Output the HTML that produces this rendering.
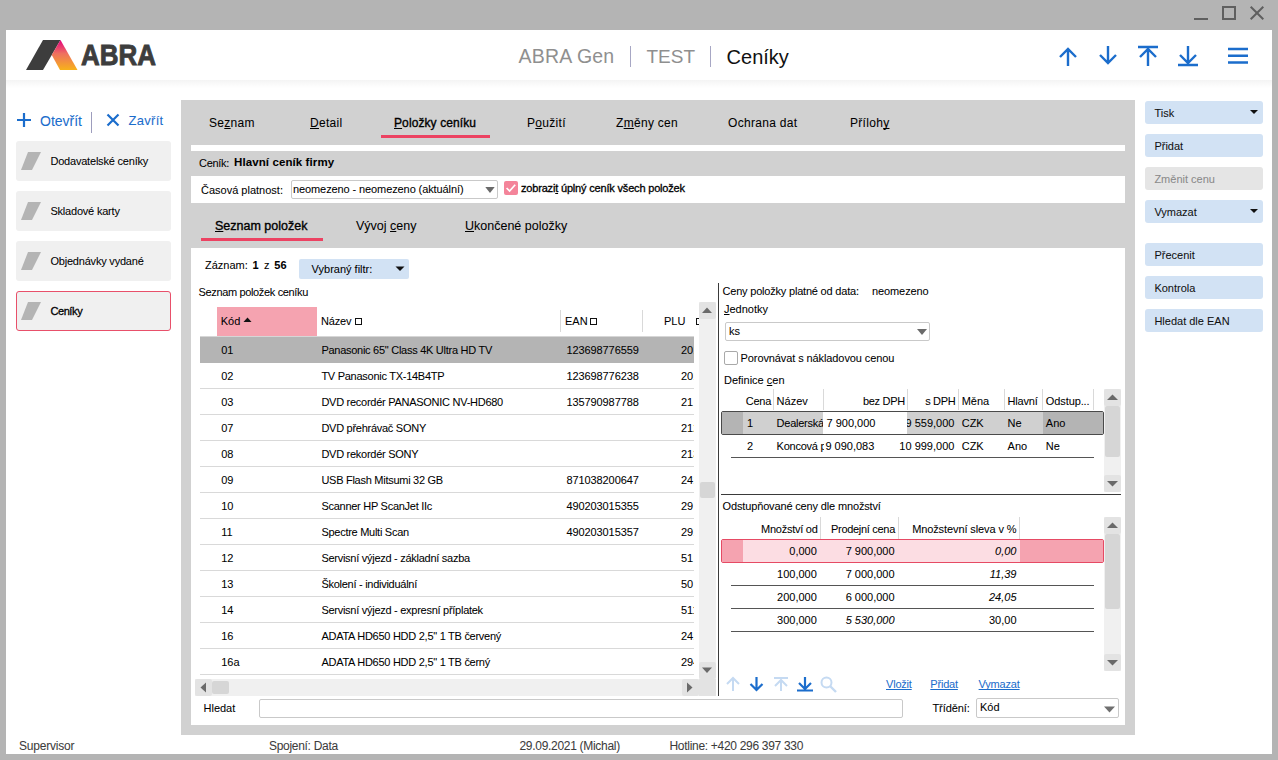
<!DOCTYPE html><html><head><meta charset="utf-8"><style>
html,body{margin:0;padding:0;}
body{width:1278px;height:760px;position:relative;overflow:hidden;background:#b4b4b4;font-family:"Liberation Sans", sans-serif;}
.a{position:absolute;}
.t{position:absolute;white-space:nowrap;line-height:1;-webkit-text-stroke:0.05px currentColor;}
u{text-decoration-skip-ink:none;text-decoration:underline;text-underline-offset:1px;text-decoration-thickness:1px;}
svg{position:absolute;}

</style></head><body>
<div class="a" style="left:6px;top:30px;width:1266px;height:724px;background:#ffffff;"></div>
<svg style="left:1190px;top:2px" width="80" height="24" viewBox="1190 2 80 24"><rect x="1194" y="18" width="14" height="2" fill="#5f5f5f"/><rect x="1223" y="7" width="12" height="12" fill="none" stroke="#5f5f5f" stroke-width="2"/><path d="M1250.7 6.7 L1263.3 19.3 M1263.3 6.7 L1250.7 19.3" stroke="#5f5f5f" stroke-width="2"/></svg>
<div class="a" style="left:6px;top:80px;width:1266px;height:8px;background:linear-gradient(#f4f4f4,#ffffff);"></div>
<svg style="left:20px;top:34px" width="140" height="42" viewBox="20 34 140 42"><defs><linearGradient id="lg" x1="0" y1="0" x2="0" y2="1"><stop offset="0" stop-color="#e5007e"/><stop offset="0.45" stop-color="#ee7060"/><stop offset="1" stop-color="#f7b21a"/></linearGradient></defs><path d="M26 70 L43 70 L60.5 40 L43 40 Z" fill="#3d3d3d"/><path d="M60.5 40 L77.5 70 L60 70 L51.75 55 Z" fill="url(#lg)"/><text x="81" y="65.3" font-family="Liberation Sans" font-weight="700" font-size="29" fill="#3d3d3d" stroke="#3d3d3d" stroke-width="0.9" textLength="75" lengthAdjust="spacingAndGlyphs">ABRA</text></svg>
<span class="t" style="top:46.99px;font-size:19.5px;color:#8f8f8f;letter-spacing:0.2px;left:518.5px;-webkit-text-stroke:0;">ABRA Gen</span>
<div class="a" style="left:630px;top:46px;width:1px;height:21px;background:#a7a7c4;"></div>
<span class="t" style="top:47.42px;font-size:19px;color:#8f8f8f;left:646.5px;-webkit-text-stroke:0;">TEST</span>
<div class="a" style="left:710px;top:46px;width:1px;height:21px;background:#a7a7c4;"></div>
<span class="t" style="top:46.57px;font-size:20px;color:#111111;left:726.6px;-webkit-text-stroke:0;">Ceníky</span>
<svg style="left:1050px;top:40px" width="210" height="32" viewBox="1050 40 210 32" fill="none" stroke="#1b6dcc" stroke-width="2.4"><path d="M1068 66 V49 M1060 57 L1068 49 L1076 57"/><path d="M1108 46 V63 M1100 55 L1108 63 L1116 55"/><path d="M1138 47 H1158 M1148 66 V49 M1140 57 L1148 49 L1156 57"/><path d="M1178 65 H1198 M1188 46 V63 M1180 55 L1188 63 L1196 55"/><path d="M1228 49 H1248 M1228 55.8 H1248 M1228 62.5 H1248" stroke-width="2.6"/></svg>
<svg style="left:10px;top:108px" width="120" height="30" viewBox="10 108 120 30" fill="none" stroke="#1b6dcc" stroke-width="2.2"><path d="M24 113 V127 M17 120 H31"/><path d="M107.5 114.5 L118.5 125.5 M118.5 114.5 L107.5 125.5"/></svg>
<span class="t" style="top:113.55px;font-size:14px;color:#1b6dcc;left:40px;">Otevřít</span>
<div class="a" style="left:91px;top:112px;width:1px;height:21px;background:#9d9dbd;"></div>
<span class="t" style="top:114.40px;font-size:13px;color:#1b6dcc;letter-spacing:0.3px;left:128.5px;">Zavřít</span>
<div class="a" style="left:16px;top:141px;width:155px;height:40px;background:#f0f0f0;border-radius:3px;"></div>
<svg style="left:16px;top:141px" width="40" height="40" viewBox="0 0 40 40"><path d="M12 11 L25 11 L16 29 L5 29 Z" fill="#b4b4b4"/></svg>
<span class="t" style="top:155.69px;font-size:11px;color:#000000;letter-spacing:-0.2px;left:50.4px;">Dodavatelské ceníky</span>
<div class="a" style="left:16px;top:191px;width:155px;height:40px;background:#f0f0f0;border-radius:3px;"></div>
<svg style="left:16px;top:191px" width="40" height="40" viewBox="0 0 40 40"><path d="M12 11 L25 11 L16 29 L5 29 Z" fill="#b4b4b4"/></svg>
<span class="t" style="top:205.69px;font-size:11px;color:#000000;letter-spacing:-0.2px;left:50.4px;">Skladové karty</span>
<div class="a" style="left:16px;top:241px;width:155px;height:40px;background:#f0f0f0;border-radius:3px;"></div>
<svg style="left:16px;top:241px" width="40" height="40" viewBox="0 0 40 40"><path d="M12 11 L25 11 L16 29 L5 29 Z" fill="#b4b4b4"/></svg>
<span class="t" style="top:255.69px;font-size:11px;color:#000000;letter-spacing:-0.2px;left:50.4px;">Objednávky vydané</span>
<div class="a" style="left:16px;top:291px;width:155px;height:40px;background:#f0f0f0;border:1px solid #e8506a;box-sizing:border-box;border-radius:3px;"></div>
<svg style="left:16px;top:291px" width="40" height="40" viewBox="0 0 40 40"><path d="M12 11 L25 11 L16 29 L5 29 Z" fill="#b4b4b4"/></svg>
<span class="t" style="top:305.69px;font-size:11px;color:#000000;letter-spacing:-0.4px;left:50.4px;-webkit-text-stroke:0.3px #000;">Ceníky</span>
<div class="a" style="left:181px;top:100px;width:954px;height:635px;background:#d1d1d1;"></div>
<span class="t" style="top:117.04px;font-size:12px;color:#000000;letter-spacing:0.3px;left:209px;">Se<u>z</u>nam</span>
<span class="t" style="top:117.04px;font-size:12px;color:#000000;letter-spacing:0.3px;left:310px;"><u>D</u>etail</span>
<span class="t" style="top:117.04px;font-size:12px;color:#000000;letter-spacing:0.1px;left:394px;-webkit-text-stroke:0.35px #000;"><u>P</u>oložky ceníku</span>
<span class="t" style="top:117.04px;font-size:12px;color:#000000;letter-spacing:0.3px;left:527px;">P<u>o</u>užití</span>
<span class="t" style="top:117.04px;font-size:12px;color:#000000;letter-spacing:0.3px;left:616px;">Z<u>m</u>ěny cen</span>
<span class="t" style="top:117.04px;font-size:12px;color:#000000;letter-spacing:0.3px;left:728px;">Ochrana dat</span>
<span class="t" style="top:117.04px;font-size:12px;color:#000000;letter-spacing:0.3px;left:850px;">Příloh<u>y</u></span>
<div class="a" style="left:381px;top:135px;width:109px;height:3px;background:#ec4262;"></div>
<div class="a" style="left:191px;top:145px;width:934px;height:6px;background:#ffffff;"></div>
<span class="t" style="top:157.69px;font-size:11px;color:#000000;letter-spacing:-0.3px;left:199px;">Ceník:</span>
<span class="t" style="top:157.27px;font-size:11.5px;color:#000000;font-weight:700;letter-spacing:0.1px;left:234px;">Hlavní ceník firmy</span>
<div class="a" style="left:191px;top:176px;width:934px;height:27px;background:#ffffff;"></div>
<span class="t" style="top:184.69px;font-size:11px;color:#000000;left:201px;">Časová platnost:</span>
<div class="a" style="left:291px;top:180px;width:207px;height:19px;background:#ffffff;border:1px solid #c9c9c9;box-sizing:border-box;border-radius:2px;"></div>
<span class="t" style="top:183.99px;font-size:11px;color:#000000;letter-spacing:-0.1px;left:293px;">neomezeno - neomezeno (aktuální)</span>
<svg style="left:484px;top:184px" width="12" height="12" viewBox="484 184 12 12"><path d="M485.3 187 H494.7 L490 193 Z" fill="#6a6a6a"/></svg>
<div class="a" style="left:504px;top:181px;width:14px;height:14px;background:#f4849a;border-radius:2px;"></div>
<svg style="left:504px;top:181px" width="14" height="14" viewBox="0 0 14 14"><path d="M2.6 7 L5.6 10 L11.2 3.8" fill="none" stroke="#ffffff" stroke-width="1.7"/></svg>
<span class="t" style="top:183.29px;font-size:11px;color:#000000;letter-spacing:-0.18px;left:521px;-webkit-text-stroke:0.3px #000;">zobrazi<u>t</u> úplný ceník všech položek</span>
<span class="t" style="top:220.42px;font-size:12.5px;color:#000000;left:215px;-webkit-text-stroke:0.35px #000;"><u>S</u>eznam položek</span>
<span class="t" style="top:220.42px;font-size:12.5px;color:#000000;left:356px;">Vývoj <u>c</u>eny</span>
<span class="t" style="top:220.42px;font-size:12.5px;color:#000000;left:465px;"><u>U</u>končené položky</span>
<div class="a" style="left:201px;top:238px;width:122px;height:3px;background:#ec4262;"></div>
<div class="a" style="left:191px;top:248px;width:934px;height:477px;background:#ffffff;"></div>
<span class="t" style="top:259.69px;font-size:11px;color:#000000;left:205px;">Záznam:</span>
<span class="t" style="top:259.69px;font-size:11px;color:#000000;font-weight:700;left:252.5px;">1</span>
<span class="t" style="top:259.69px;font-size:11px;color:#000000;left:264px;">z</span>
<span class="t" style="top:259.69px;font-size:11px;color:#000000;font-weight:700;left:274.3px;">56</span>
<div class="a" style="left:299px;top:259px;width:110px;height:20px;background:#d2e2f4;border-radius:2px;"></div>
<span class="t" style="top:264.19px;font-size:11px;color:#000000;left:311.6px;">Vybraný filtr:</span>
<svg style="left:394px;top:264px" width="12" height="10" viewBox="394 264 12 10"><path d="M395.5 266.5 H404.5 L400 271 Z" fill="#111"/></svg>
<span class="t" style="top:286.69px;font-size:11px;color:#000000;letter-spacing:-0.35px;left:198.5px;">Seznam položek ceníku</span>
<div class="a" style="left:217px;top:307px;width:100px;height:29px;background:#f5a3b0;"></div>
<span class="t" style="top:316.39px;font-size:11px;color:#000000;left:220.7px;">Kód</span>
<svg style="left:240px;top:316px" width="12" height="8" viewBox="240 316 12 8"><path d="M243.5 322 L247.5 317.5 L251.5 322 Z" fill="#111"/></svg>
<span class="t" style="top:316.39px;font-size:11px;color:#000000;letter-spacing:-0.2px;left:321px;">Název</span>
<div class="a" style="left:355px;top:318px;width:7px;height:7px;border:1.2px solid #111;box-sizing:border-box;"></div>
<div class="a" style="left:560px;top:310px;width:1px;height:22px;background:#d9d9d9;"></div>
<span class="t" style="top:316.39px;font-size:11px;color:#000000;left:565px;">EAN</span>
<div class="a" style="left:590px;top:318px;width:7px;height:7px;border:1.2px solid #111;box-sizing:border-box;"></div>
<div class="a" style="left:642px;top:310px;width:1px;height:22px;background:#d9d9d9;"></div>
<span class="t" style="top:316.39px;font-size:11px;color:#000000;left:664px;">PLU</span>
<div class="a" style="left:696px;top:318px;width:4px;height:7px;border:1.2px solid #111;box-sizing:border-box;"></div>
<div class="a" style="left:200px;top:336px;width:494px;height:1px;background:#d6d6d6;"></div>
<div class="a" style="left:200px;top:337px;width:494px;height:26px;background:#b4b4b4;"></div>
<span class="t" style="top:345.09px;font-size:11px;color:#000000;left:221.2px;">01</span>
<span class="t" style="top:345.09px;font-size:11px;color:#000000;letter-spacing:-0.27px;left:321.4px;">Panasonic 65&quot; Class 4K Ultra HD TV</span>
<span class="t" style="top:345.09px;font-size:11px;color:#000000;letter-spacing:-0.1px;left:566.5px;">123698776559</span>
<div class="a" style="left:600px;top:0;width:94px;height:760px;overflow:hidden"><div class="a" style="left:-600px;top:0;width:1278px;height:760px"><span class="t" style="top:345.09px;font-size:11px;color:#000000;left:681px;">2011</span></div></div>
<div class="a" style="left:200px;top:388px;width:494px;height:1px;background:#d9d9d9;"></div>
<span class="t" style="top:371.09px;font-size:11px;color:#000000;left:221.2px;">02</span>
<span class="t" style="top:371.09px;font-size:11px;color:#000000;letter-spacing:-0.27px;left:321.4px;">TV Panasonic TX-14B4TP</span>
<span class="t" style="top:371.09px;font-size:11px;color:#000000;letter-spacing:-0.1px;left:566.5px;">123698776238</span>
<div class="a" style="left:600px;top:0;width:94px;height:760px;overflow:hidden"><div class="a" style="left:-600px;top:0;width:1278px;height:760px"><span class="t" style="top:371.09px;font-size:11px;color:#000000;left:681px;">2012</span></div></div>
<div class="a" style="left:200px;top:414px;width:494px;height:1px;background:#d9d9d9;"></div>
<span class="t" style="top:397.09px;font-size:11px;color:#000000;left:221.2px;">03</span>
<span class="t" style="top:397.09px;font-size:11px;color:#000000;letter-spacing:-0.27px;left:321.4px;">DVD recordér PANASONIC NV-HD680</span>
<span class="t" style="top:397.09px;font-size:11px;color:#000000;letter-spacing:-0.1px;left:566.5px;">135790987788</span>
<div class="a" style="left:600px;top:0;width:94px;height:760px;overflow:hidden"><div class="a" style="left:-600px;top:0;width:1278px;height:760px"><span class="t" style="top:397.09px;font-size:11px;color:#000000;left:681px;">21</span></div></div>
<div class="a" style="left:200px;top:440px;width:494px;height:1px;background:#d9d9d9;"></div>
<span class="t" style="top:423.09px;font-size:11px;color:#000000;left:221.2px;">07</span>
<span class="t" style="top:423.09px;font-size:11px;color:#000000;letter-spacing:-0.27px;left:321.4px;">DVD přehrávač SONY</span>
<div class="a" style="left:600px;top:0;width:94px;height:760px;overflow:hidden"><div class="a" style="left:-600px;top:0;width:1278px;height:760px"><span class="t" style="top:423.09px;font-size:11px;color:#000000;left:681px;">2121</span></div></div>
<div class="a" style="left:200px;top:466px;width:494px;height:1px;background:#d9d9d9;"></div>
<span class="t" style="top:449.09px;font-size:11px;color:#000000;left:221.2px;">08</span>
<span class="t" style="top:449.09px;font-size:11px;color:#000000;letter-spacing:-0.27px;left:321.4px;">DVD rekordér SONY</span>
<div class="a" style="left:600px;top:0;width:94px;height:760px;overflow:hidden"><div class="a" style="left:-600px;top:0;width:1278px;height:760px"><span class="t" style="top:449.09px;font-size:11px;color:#000000;left:681px;">2131</span></div></div>
<div class="a" style="left:200px;top:492px;width:494px;height:1px;background:#d9d9d9;"></div>
<span class="t" style="top:475.09px;font-size:11px;color:#000000;left:221.2px;">09</span>
<span class="t" style="top:475.09px;font-size:11px;color:#000000;letter-spacing:-0.27px;left:321.4px;">USB Flash Mitsumi 32 GB</span>
<span class="t" style="top:475.09px;font-size:11px;color:#000000;letter-spacing:-0.1px;left:566.5px;">871038200647</span>
<div class="a" style="left:600px;top:0;width:94px;height:760px;overflow:hidden"><div class="a" style="left:-600px;top:0;width:1278px;height:760px"><span class="t" style="top:475.09px;font-size:11px;color:#000000;left:681px;">2411</span></div></div>
<div class="a" style="left:200px;top:518px;width:494px;height:1px;background:#d9d9d9;"></div>
<span class="t" style="top:501.09px;font-size:11px;color:#000000;left:221.2px;">10</span>
<span class="t" style="top:501.09px;font-size:11px;color:#000000;letter-spacing:-0.27px;left:321.4px;">Scanner HP ScanJet IIc</span>
<span class="t" style="top:501.09px;font-size:11px;color:#000000;letter-spacing:-0.1px;left:566.5px;">490203015355</span>
<div class="a" style="left:600px;top:0;width:94px;height:760px;overflow:hidden"><div class="a" style="left:-600px;top:0;width:1278px;height:760px"><span class="t" style="top:501.09px;font-size:11px;color:#000000;left:681px;">29</span></div></div>
<div class="a" style="left:200px;top:544px;width:494px;height:1px;background:#d9d9d9;"></div>
<span class="t" style="top:527.09px;font-size:11px;color:#000000;left:221.2px;">11</span>
<span class="t" style="top:527.09px;font-size:11px;color:#000000;letter-spacing:-0.27px;left:321.4px;">Spectre Multi Scan</span>
<span class="t" style="top:527.09px;font-size:11px;color:#000000;letter-spacing:-0.1px;left:566.5px;">490203015357</span>
<div class="a" style="left:600px;top:0;width:94px;height:760px;overflow:hidden"><div class="a" style="left:-600px;top:0;width:1278px;height:760px"><span class="t" style="top:527.09px;font-size:11px;color:#000000;left:681px;">2911</span></div></div>
<div class="a" style="left:200px;top:570px;width:494px;height:1px;background:#d9d9d9;"></div>
<span class="t" style="top:553.09px;font-size:11px;color:#000000;left:221.2px;">12</span>
<span class="t" style="top:553.09px;font-size:11px;color:#000000;letter-spacing:-0.27px;left:321.4px;">Servisní výjezd - základní sazba</span>
<div class="a" style="left:600px;top:0;width:94px;height:760px;overflow:hidden"><div class="a" style="left:-600px;top:0;width:1278px;height:760px"><span class="t" style="top:553.09px;font-size:11px;color:#000000;left:681px;">51</span></div></div>
<div class="a" style="left:200px;top:596px;width:494px;height:1px;background:#d9d9d9;"></div>
<span class="t" style="top:579.09px;font-size:11px;color:#000000;left:221.2px;">13</span>
<span class="t" style="top:579.09px;font-size:11px;color:#000000;letter-spacing:-0.27px;left:321.4px;">Školení - individuální</span>
<div class="a" style="left:600px;top:0;width:94px;height:760px;overflow:hidden"><div class="a" style="left:-600px;top:0;width:1278px;height:760px"><span class="t" style="top:579.09px;font-size:11px;color:#000000;left:681px;">50</span></div></div>
<div class="a" style="left:200px;top:622px;width:494px;height:1px;background:#d9d9d9;"></div>
<span class="t" style="top:605.09px;font-size:11px;color:#000000;left:221.2px;">14</span>
<span class="t" style="top:605.09px;font-size:11px;color:#000000;letter-spacing:-0.27px;left:321.4px;">Servisní výjezd - expresní příplatek</span>
<div class="a" style="left:600px;top:0;width:94px;height:760px;overflow:hidden"><div class="a" style="left:-600px;top:0;width:1278px;height:760px"><span class="t" style="top:605.09px;font-size:11px;color:#000000;left:681px;">5111</span></div></div>
<div class="a" style="left:200px;top:648px;width:494px;height:1px;background:#d9d9d9;"></div>
<span class="t" style="top:631.09px;font-size:11px;color:#000000;left:221.2px;">16</span>
<span class="t" style="top:631.09px;font-size:11px;color:#000000;letter-spacing:-0.27px;left:321.4px;">ADATA HD650 HDD 2,5&quot; 1 TB červený</span>
<div class="a" style="left:600px;top:0;width:94px;height:760px;overflow:hidden"><div class="a" style="left:-600px;top:0;width:1278px;height:760px"><span class="t" style="top:631.09px;font-size:11px;color:#000000;left:681px;">2411</span></div></div>
<div class="a" style="left:200px;top:674px;width:494px;height:1px;background:#d9d9d9;"></div>
<span class="t" style="top:657.09px;font-size:11px;color:#000000;left:221.2px;">16a</span>
<span class="t" style="top:657.09px;font-size:11px;color:#000000;letter-spacing:-0.27px;left:321.4px;">ADATA HD650 HDD 2,5&quot; 1 TB černý</span>
<div class="a" style="left:600px;top:0;width:94px;height:760px;overflow:hidden"><div class="a" style="left:-600px;top:0;width:1278px;height:760px"><span class="t" style="top:657.09px;font-size:11px;color:#000000;left:681px;">2941</span></div></div>
<div class="a" style="left:699px;top:302px;width:17px;height:377px;background:#f0f0f0;"></div>
<div class="a" style="left:699px;top:302px;width:17px;height:17px;background:#e3e3e3;border-radius:2px;"></div>
<div class="a" style="left:699px;top:662px;width:17px;height:17px;background:#e3e3e3;border-radius:2px;"></div>
<div class="a" style="left:700px;top:482px;width:15px;height:16px;background:#d6d6d6;border-radius:2px;"></div>
<svg style="left:699px;top:302px" width="17" height="377" viewBox="699 302 17 377"><path d="M702 313 L707 307.5 L712 313 Z" fill="#6a6a6a"/><path d="M702 667.5 L712 667.5 L707 673 Z" fill="#6a6a6a"/></svg>
<div class="a" style="left:195px;top:679px;width:504px;height:17px;background:#f0f0f0;"></div>
<div class="a" style="left:195px;top:679px;width:17px;height:17px;background:#e3e3e3;border-radius:2px;"></div>
<div class="a" style="left:212px;top:681px;width:17px;height:13px;background:#d6d6d6;border-radius:2px;"></div>
<div class="a" style="left:682px;top:679px;width:17px;height:17px;background:#e3e3e3;border-radius:2px;"></div>
<div class="a" style="left:699px;top:679px;width:17px;height:17px;background:#e3e3e3;"></div>
<svg style="left:195px;top:679px" width="504" height="17" viewBox="195 679 504 17"><path d="M206 682.5 L206 692.5 L200.5 687.5 Z" fill="#6a6a6a"/><path d="M687 682.5 L687 692.5 L692.5 687.5 Z" fill="#6a6a6a"/></svg>
<div class="a" style="left:718px;top:283px;width:1px;height:413px;background:#3a3a3a;"></div>
<span class="t" style="top:286.49px;font-size:11px;color:#000000;letter-spacing:-0.2px;left:722.5px;">Ceny položky platné od data:</span>
<span class="t" style="top:286.49px;font-size:11px;color:#000000;letter-spacing:-0.1px;left:872px;">neomezeno</span>
<span class="t" style="top:303.69px;font-size:11px;color:#000000;left:724px;"><u>J</u>ednotky</span>
<div class="a" style="left:725px;top:322px;width:205px;height:19px;background:#ffffff;border:1px solid #c9c9c9;box-sizing:border-box;border-radius:2px;"></div>
<span class="t" style="top:326.19px;font-size:11px;color:#000000;left:729px;">ks</span>
<svg style="left:914px;top:326px" width="14" height="12" viewBox="914 326 14 12"><path d="M917 329 H927 L922 335 Z" fill="#6a6a6a"/></svg>
<div class="a" style="left:724px;top:351px;width:14px;height:14px;background:#ffffff;border:1px solid #a9a9a9;box-sizing:border-box;border-radius:2px;"></div>
<span class="t" style="top:352.69px;font-size:11px;color:#000000;letter-spacing:-0.1px;left:740.6px;">Porovnávat s nákladovou cenou</span>
<span class="t" style="top:374.99px;font-size:11px;color:#000000;left:724px;">Definice <u>c</u>en</span>
<div class="a" style="left:773px;top:389px;width:1px;height:21px;background:#d9d9d9;"></div>
<div class="a" style="left:823px;top:389px;width:1px;height:21px;background:#d9d9d9;"></div>
<div class="a" style="left:907px;top:389px;width:1px;height:21px;background:#d9d9d9;"></div>
<div class="a" style="left:958px;top:389px;width:1px;height:21px;background:#d9d9d9;"></div>
<div class="a" style="left:1004px;top:389px;width:1px;height:21px;background:#d9d9d9;"></div>
<div class="a" style="left:1042px;top:389px;width:1px;height:21px;background:#d9d9d9;"></div>
<div class="a" style="left:1093px;top:389px;width:1px;height:21px;background:#d9d9d9;"></div>
<span class="t" style="top:396.29px;font-size:11px;color:#000000;letter-spacing:-0.2px;left:745.7px;">Cena</span>
<span class="t" style="top:396.29px;font-size:11px;color:#000000;left:776.6px;">Název</span>
<span class="t" style="top:396.29px;font-size:11px;color:#000000;letter-spacing:-0.3px;right:373.20000000000005px;">bez DPH</span>
<span class="t" style="top:396.29px;font-size:11px;color:#000000;letter-spacing:-0.3px;right:322.6px;">s DPH</span>
<span class="t" style="top:396.29px;font-size:11px;color:#000000;left:961.7px;">Měna</span>
<span class="t" style="top:396.29px;font-size:11px;color:#000000;letter-spacing:-0.2px;left:1007.6px;">Hlavní</span>
<span class="t" style="top:396.29px;font-size:11px;color:#000000;letter-spacing:-0.1px;left:1045.8px;">Odstup...</span>
<div class="a" style="left:721px;top:411px;width:383px;height:24px;background:#d0d0d0;border:1px solid #4a4a4a;box-sizing:border-box;border-radius:2px;"></div>
<div class="a" style="left:722px;top:412px;width:21px;height:22px;background:#b4b4b4;"></div>
<div class="a" style="left:823px;top:412px;width:84px;height:22px;background:#ffffff;"></div>
<div class="a" style="left:1043px;top:412px;width:60px;height:22px;background:#b4b4b4;"></div>
<span class="t" style="top:418.29px;font-size:11px;color:#000000;left:747px;">1</span>
<div class="a" style="left:770px;top:0;width:53px;height:760px;overflow:hidden"><div class="a" style="left:-770px;top:0;width:1278px;height:760px"><span class="t" style="top:418.29px;font-size:11px;color:#000000;letter-spacing:-0.25px;left:776.6px;">Dealerská cena</span></div></div>
<span class="t" style="top:418.29px;font-size:11px;color:#000000;left:826.5px;">7 900,000</span>
<div class="a" style="left:907px;top:0;width:51px;height:760px;overflow:hidden"><div class="a" style="left:-907px;top:0;width:1278px;height:760px"><span class="t" style="top:418.29px;font-size:11px;color:#000000;right:323.6px;">9 559,000</span></div></div>
<span class="t" style="top:418.29px;font-size:11px;color:#000000;left:961.7px;">CZK</span>
<span class="t" style="top:418.29px;font-size:11px;color:#000000;left:1007.6px;">Ne</span>
<span class="t" style="top:418.29px;font-size:11px;color:#000000;left:1045.8px;">Ano</span>
<span class="t" style="top:441.09px;font-size:11px;color:#000000;left:747px;">2</span>
<div class="a" style="left:770px;top:0;width:54px;height:760px;overflow:hidden"><div class="a" style="left:-770px;top:0;width:1278px;height:760px"><span class="t" style="top:441.09px;font-size:11px;color:#000000;letter-spacing:-0.25px;left:776.6px;">Koncová pena</span></div></div>
<span class="t" style="top:441.09px;font-size:11px;color:#000000;left:825.4px;">9 090,083</span>
<span class="t" style="top:441.09px;font-size:11px;color:#000000;right:323.6px;">10 999,000</span>
<span class="t" style="top:441.09px;font-size:11px;color:#000000;left:961.7px;">CZK</span>
<span class="t" style="top:441.09px;font-size:11px;color:#000000;left:1007.6px;">Ano</span>
<span class="t" style="top:441.09px;font-size:11px;color:#000000;left:1045.8px;">Ne</span>
<div class="a" style="left:731px;top:457px;width:363px;height:1px;background:#555555;"></div>
<div class="a" style="left:721px;top:494px;width:400px;height:1px;background:#3a3a3a;"></div>
<div class="a" style="left:1104px;top:389px;width:17px;height:103px;background:#f0f0f0;"></div>
<div class="a" style="left:1104px;top:389px;width:17px;height:17px;background:#e3e3e3;border-radius:2px;"></div>
<div class="a" style="left:1105px;top:406px;width:15px;height:51px;background:#d6d6d6;border-radius:2px;"></div>
<div class="a" style="left:1104px;top:475px;width:17px;height:17px;background:#e3e3e3;border-radius:2px;"></div>
<svg style="left:1104px;top:389px" width="17" height="103" viewBox="1104 389 17 103"><path d="M1107 400 L1112.5 394.5 L1118 400 Z" fill="#6a6a6a"/><path d="M1107 481 L1118 481 L1112.5 486.5 Z" fill="#6a6a6a"/></svg>
<span class="t" style="top:501.29px;font-size:11px;color:#000000;letter-spacing:-0.15px;left:722.6px;">Odstupňované ceny dle množství</span>
<div class="a" style="left:820px;top:517px;width:1px;height:22px;background:#d9d9d9;"></div>
<div class="a" style="left:898px;top:517px;width:1px;height:22px;background:#d9d9d9;"></div>
<div class="a" style="left:1019px;top:517px;width:1px;height:22px;background:#d9d9d9;"></div>
<span class="t" style="top:523.79px;font-size:11px;color:#000000;letter-spacing:-0.25px;right:460.4px;">Množství od</span>
<span class="t" style="top:523.79px;font-size:11px;color:#000000;letter-spacing:-0.3px;right:383px;">Prodejní cena</span>
<span class="t" style="top:523.79px;font-size:11px;color:#000000;letter-spacing:-0.1px;right:261.5px;">Množstevní sleva v %</span>
<div class="a" style="left:721px;top:539px;width:383px;height:24px;background:#fcdde3;border:1px solid #e64a64;box-sizing:border-box;border-radius:2px;"></div>
<div class="a" style="left:722px;top:540px;width:21px;height:22px;background:#f5a3b0;"></div>
<div class="a" style="left:1020px;top:540px;width:83px;height:22px;background:#f5a3b0;"></div>
<span class="t" style="top:546.19px;font-size:11px;color:#000000;right:461.20000000000005px;">0,000</span>
<span class="t" style="top:546.19px;font-size:11px;color:#000000;right:383.4px;">7 900,000</span>
<span class="t" style="top:546.19px;font-size:11px;color:#000000;font-style:italic;right:261.5px;">0,00</span>
<span class="t" style="top:569.19px;font-size:11px;color:#000000;right:461.20000000000005px;">100,000</span>
<span class="t" style="top:569.19px;font-size:11px;color:#000000;right:383.4px;">7 000,000</span>
<span class="t" style="top:569.19px;font-size:11px;color:#000000;font-style:italic;right:261.5px;">11,39</span>
<span class="t" style="top:592.19px;font-size:11px;color:#000000;right:461.20000000000005px;">200,000</span>
<span class="t" style="top:592.19px;font-size:11px;color:#000000;right:383.4px;">6 000,000</span>
<span class="t" style="top:592.19px;font-size:11px;color:#000000;font-style:italic;right:261.5px;">24,05</span>
<span class="t" style="top:615.19px;font-size:11px;color:#000000;right:461.20000000000005px;">300,000</span>
<span class="t" style="top:615.19px;font-size:11px;color:#000000;font-style:italic;right:383.4px;">5 530,000</span>
<span class="t" style="top:615.19px;font-size:11px;color:#000000;right:261.5px;">30,00</span>
<div class="a" style="left:731px;top:585px;width:363px;height:1px;background:#555555;"></div>
<div class="a" style="left:731px;top:608px;width:363px;height:1px;background:#555555;"></div>
<div class="a" style="left:731px;top:631px;width:363px;height:1px;background:#555555;"></div>
<div class="a" style="left:1104px;top:517px;width:17px;height:154px;background:#f0f0f0;"></div>
<div class="a" style="left:1104px;top:517px;width:17px;height:17px;background:#e3e3e3;border-radius:2px;"></div>
<div class="a" style="left:1105px;top:534px;width:15px;height:75px;background:#d6d6d6;border-radius:2px;"></div>
<div class="a" style="left:1104px;top:654px;width:17px;height:17px;background:#e3e3e3;border-radius:2px;"></div>
<svg style="left:1104px;top:517px" width="17" height="154" viewBox="1104 517 17 154"><path d="M1107 528 L1112.5 522.5 L1118 528 Z" fill="#6a6a6a"/><path d="M1107 660 L1118 660 L1112.5 665.5 Z" fill="#6a6a6a"/></svg>
<svg style="left:720px;top:672px" width="125" height="24" viewBox="720 672 125 24" fill="none" stroke-width="2"><path d="M733 691 V678 M727 684 L733 678 L739 684" stroke="#c5daf2"/><path d="M756.5 677 V690 M750.5 684 L756.5 690 L762.5 684" stroke="#1b6dcc" stroke-width="2.2"/><path d="M774 678 H788 M781 691 V680 M775 686 L781 680 L787 686" stroke="#c5daf2"/><path d="M797 690.5 H813 M805 677 V689 M799 683 L805 689 L811 683" stroke="#1b6dcc" stroke-width="2.2"/><circle cx="826.5" cy="682.5" r="5" stroke="#c5daf2"/><path d="M830 686 L836 692" stroke="#c5daf2" stroke-width="2.4"/></svg>
<span class="t" style="top:678.69px;font-size:11px;color:#1b6dcc;letter-spacing:-0.2px;left:886px;text-decoration:underline;text-underline-offset:1px;text-decoration-skip-ink:none;">Vložit</span>
<span class="t" style="top:678.69px;font-size:11px;color:#1b6dcc;letter-spacing:-0.2px;left:930.3px;text-decoration:underline;text-underline-offset:1px;text-decoration-skip-ink:none;">Přidat</span>
<span class="t" style="top:678.69px;font-size:11px;color:#1b6dcc;letter-spacing:-0.2px;left:978.6px;text-decoration:underline;text-underline-offset:1px;text-decoration-skip-ink:none;">Vymazat</span>
<span class="t" style="top:702.69px;font-size:11px;color:#000000;left:203.5px;">Hledat</span>
<div class="a" style="left:259px;top:699px;width:644px;height:19px;background:#ffffff;border:1px solid #c9c9c9;box-sizing:border-box;border-radius:2px;"></div>
<span class="t" style="top:702.69px;font-size:11px;color:#000000;letter-spacing:-0.1px;left:932.5px;">Třídění:</span>
<div class="a" style="left:976px;top:698px;width:143px;height:20px;background:#ffffff;border:1px solid #c9c9c9;box-sizing:border-box;border-radius:2px;"></div>
<span class="t" style="top:701.69px;font-size:11px;color:#000000;left:980px;">Kód</span>
<svg style="left:1100px;top:702px" width="18" height="14" viewBox="1100 702 18 14"><path d="M1104 706.5 H1115 L1109.5 712.5 Z" fill="#6f6f6f"/></svg>
<div class="a" style="left:1145px;top:101px;width:118px;height:23px;background:#d2e2f4;border-radius:3px;"></div>
<span class="t" style="top:108.49px;font-size:11px;color:#111111;left:1154.4px;">Tisk</span>
<svg style="left:1248px;top:108px" width="12" height="10" viewBox="0 0 12 10"><path d="M2 2 H10 L6 6 Z" fill="#111"/></svg>
<div class="a" style="left:1145px;top:134px;width:118px;height:23px;background:#d2e2f4;border-radius:3px;"></div>
<span class="t" style="top:141.49px;font-size:11px;color:#111111;left:1154.4px;">Přidat</span>
<div class="a" style="left:1145px;top:167px;width:118px;height:23px;background:#e5e5e5;border-radius:3px;"></div>
<span class="t" style="top:174.49px;font-size:11px;color:#8a8a8a;left:1154.4px;">Změnit cenu</span>
<div class="a" style="left:1145px;top:200px;width:118px;height:23px;background:#d2e2f4;border-radius:3px;"></div>
<span class="t" style="top:207.49px;font-size:11px;color:#111111;left:1154.4px;">Vymazat</span>
<svg style="left:1248px;top:207px" width="12" height="10" viewBox="0 0 12 10"><path d="M2 2 H10 L6 6 Z" fill="#111"/></svg>
<div class="a" style="left:1145px;top:243px;width:118px;height:23px;background:#d2e2f4;border-radius:3px;"></div>
<span class="t" style="top:250.49px;font-size:11px;color:#111111;left:1154.4px;">Přecenit</span>
<div class="a" style="left:1145px;top:276px;width:118px;height:23px;background:#d2e2f4;border-radius:3px;"></div>
<span class="t" style="top:283.49px;font-size:11px;color:#111111;left:1154.4px;">Kontrola</span>
<div class="a" style="left:1145px;top:309px;width:118px;height:23px;background:#d2e2f4;border-radius:3px;"></div>
<span class="t" style="top:316.49px;font-size:11px;color:#111111;left:1154.4px;">Hledat dle EAN</span>
<span class="t" style="top:739.84px;font-size:12px;color:#3c3c3c;letter-spacing:-0.2px;left:19px;">Supervisor</span>
<span class="t" style="top:739.84px;font-size:12px;color:#3c3c3c;letter-spacing:-0.3px;left:269px;">Spojení: Data</span>
<span class="t" style="top:739.84px;font-size:12px;color:#3c3c3c;letter-spacing:-0.3px;left:519.5px;">29.09.2021 (Michal)</span>
<span class="t" style="top:739.84px;font-size:12px;color:#3c3c3c;letter-spacing:-0.3px;left:669.5px;">Hotline: +420 296 397 330</span>
</body></html>
